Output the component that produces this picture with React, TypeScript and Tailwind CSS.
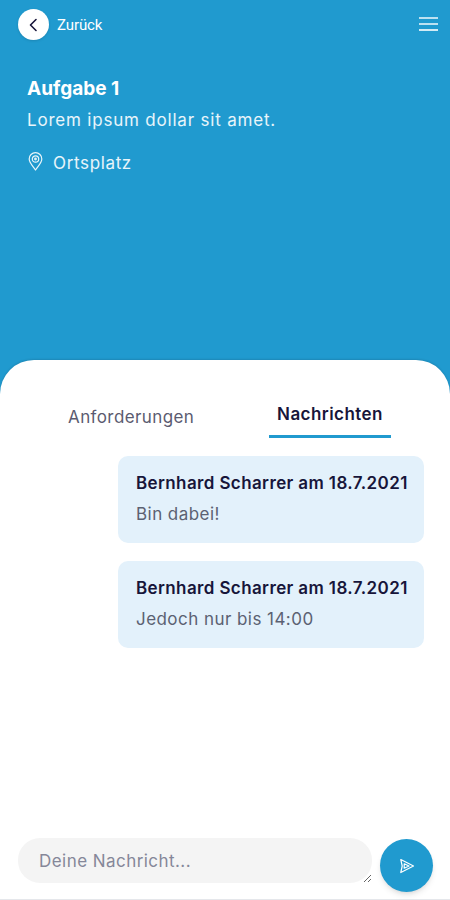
import { useState } from "react";

interface Message {
  author: string;
  date: string;
  text: string;
}

const MESSAGES: Message[] = [
  { author: "Bernhard Scharrer", date: "18.7.2021", text: "Bin dabei!" },
  { author: "Bernhard Scharrer", date: "18.7.2021", text: "Jedoch nur bis 14:00" },
];

export default function App() {
  const [tab, setTab]     = useState<"tasks" | "messages">("messages");
  const [input, setInput] = useState("");

  return (
    <div className="w-full h-[900px] overflow-hidden flex flex-col bg-[#209acf] font-['Inter',sans-serif]">

      {/* Header */}
      <header className="h-[360px] shrink-0 text-white">
        <div className="flex items-center justify-between pl-[18px] pr-3 pt-[9px]">
          <button className="flex items-center gap-2 font-['Roboto',sans-serif] text-[15px]">
            <span className="w-[31px] h-[31px] rounded-full bg-white flex items-center justify-center shadow">
              <svg className="w-[9px] h-[14px]" viewBox="0 0 9 14" fill="none" stroke="#17153a" strokeWidth={1.6}>
                <path strokeLinecap="round" strokeLinejoin="round" d="M7 1.5L1.5 7L7 12.5" />
              </svg>
            </span>
            <span className="pt-0.5 tracking-[-0.1px]">Zurück</span>
          </button>
          <button className="-mt-0.5 flex flex-col gap-1" aria-label="Menü">
            <span className="w-[19px] h-0.5 bg-white/70" />
            <span className="w-[19px] h-0.5 bg-white/70" />
            <span className="w-[19px] h-0.5 bg-white/80" />
          </button>
        </div>

        <div className="px-[27px] pt-[37px]">
          <h1 className="text-[19px] leading-6 font-bold">Aufgabe 1</h1>
          <p className="mt-[7px] text-[17px] leading-6 tracking-[0.8px] text-white/90">Lorem ipsum dollar sit amet.</p>
          <div className="mt-[19px] flex items-center gap-[9px] text-white/90">
            <svg className="w-[17px] h-[19px] -mt-1" viewBox="0 0 17 19" fill="none" stroke="currentColor" strokeWidth={1.2}>
              <path strokeLinejoin="round" d="M8.5 18C6.5 14.5 2.2 11 2.2 7a6.3 6.3 0 0 1 12.6 0c0 4-4.3 7.500-6.300 11z" />
              <circle cx="8.500" cy="7" r="3.200" />
              <circle cx="8.500" cy="7" r="0.800" />
            </svg>
            <span className="text-[17px] leading-6 tracking-[0.650px]">Ortsplatz</span>
          </div>
        </div>
      </header>

      <main className="flex-1 min-h-0 flex flex-col rounded-t-[34px] bg-white shadow-[0_-1px_2px_rgba(0,0,0,0.12)]">
        <nav className="h-[78px] shrink-0 pl-[68px] pr-[59px] flex items-end justify-between">
          <button onClick={() => setTab("tasks")}
            className={`h-[37px] flex pt-1 text-[17px] leading-6 tracking-[0.4px] ${tab === "tasks" ? "font-semibold text-[#17153a]" : "text-[#5b5b70]"}`}>
            Anforderungen
          </button>
          <button onClick={() => setTab("messages")}
            className={`w-[122px] h-[37px] flex justify-center pt-px text-[17px] leading-6 tracking-[0.450px] whitespace-nowrap ${tab === "messages" ? "font-semibold text-[#17153a] border-b-3 border-[#209acf]" : "text-[#5b5b70]"}`}>
            Nachrichten
          </button>
        </nav>

        {/* Messages */}
        <div className="flex-1 min-h-0 pt-[18px] pr-[26px] flex flex-col items-end gap-[17.500px]">
          {MESSAGES.map((m, i) => (
            <div key={i} className="w-[306px] h-[87px] rounded-[10px] bg-[#e3f1fb] px-[18px] pt-[15px] whitespace-nowrap">
              <p className="text-[17px] leading-6 tracking-[0.380px] font-semibold text-[#17153a]">{m.author} am {m.date}</p>
              <p className="mt-[7px] text-[17px] leading-6 tracking-[0.450px] text-[#5b6172]">{m.text}</p>
            </div>
          ))}
        </div>

        {/* Input */}
        <div className="h-[62px] shrink-0 pl-[18px] pr-[17px] flex items-start gap-2 border-b border-[#e5e7eb]">
          <textarea
            value={input}
            onChange={e => setInput(e.target.value)}
            placeholder="Deine Nachricht..."
            rows={1}
            className="flex-1 h-[45px] rounded-[22px] bg-[#f4f4f4] px-[21px] py-[11px] text-[17px] leading-6 tracking-[0.450px] text-[#17153a] placeholder:text-[#858799] outline-none overflow-hidden"
          />
          <button aria-label="Senden"
            className="mt-px w-[53px] h-[53px] rounded-full bg-[#209acf] text-white flex items-center justify-center shadow-md">
            <svg className="w-4 h-4" viewBox="0 0 16 16" fill="none" stroke="currentColor" strokeWidth={1.2} strokeLinejoin="round">
              <path d="M1.800 1.500L14.500 8L1.800 14.500L3.200 8z" />
              <path d="M5.200 5.800L10 8L5.200 10.200z" />
            </svg>
          </button>
        </div>
      </main>
    </div>
  );
}
